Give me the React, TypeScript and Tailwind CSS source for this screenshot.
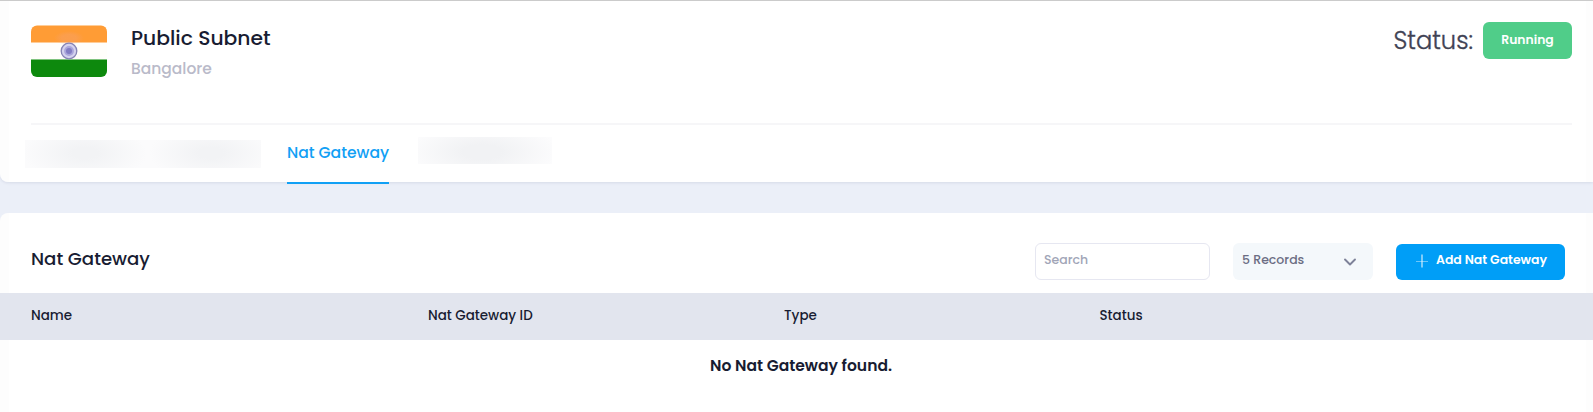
import React from "react";

function Flag() {
  return (
    <svg width="76" height="52" viewBox="0 0 76 52" className="mt-px block shrink-0">
      <defs>
        <clipPath id="flag-round">
          <rect y="0.500" width="76" height="51.500" rx="6" />
        </clipPath>
        <filter id="flag-soft" x="-10%" y="-50%" width="120%" height="200%">
          <feGaussianBlur stdDeviation="0.5" />
        </filter>
        <radialGradient id="flag-glow">
          <stop offset="0.5" stopColor="#f4a27a" stopOpacity="0.35" />
          <stop offset="1" stopColor="#f4a27a" stopOpacity="0" />
        </radialGradient>
      </defs>
      <g clipPath="url(#flag-round)">
        <rect width="76" height="52" fill="#fffefb" />
        <g filter="url(#flag-soft)">
          <rect x="-4" y="-4" width="84" height="21.500" fill="#ff9c35" />
          <rect x="-4" y="34.5" width="84" height="22" fill="#0d8909" />
        </g>
        <ellipse cx="38" cy="13" rx="15" ry="7" fill="url(#flag-glow)" />
        <circle cx="38" cy="26" r="7.8" fill="#d4d2ee" stroke="#8583b5" strokeWidth="1.3" />
        <circle cx="38" cy="26" r="4.900" fill="#aaa6dc" />
        <circle cx="38" cy="26" r="3" fill="#827dc4" />
      </g>
    </svg>
  );
}

const columns = [
  { label: "Name", cell: "w-[397px]" },
  { label: "Nat Gateway ID", cell: "w-[356px]" },
  { label: "Type", cell: "w-[315.500px]" },
  { label: "Status", cell: "w-[200px]" },
];

export default function App() {
  return (
    <div
      className="flex h-[412px] w-full flex-col overflow-hidden border-t border-[#cbcbcb] bg-[#ebeff8] text-[#181c32]"
      style={{ fontFamily: 'Poppins, Inter, "Liberation Sans", sans-serif' }}
    >
      <section className="h-[181px] shrink-0 rounded-bl-lg bg-[linear-gradient(90deg,#fdfdfd_9px,#ffffff_9px,#ffffff_1586px,#fdfdfd_1586px)] pr-[21px] pl-[31px] shadow-[0_1px_3px_rgba(70,80,120,0.12)]">
        <header className="flex h-[124px] items-start border-b-2 border-[#f6f6f8] pt-[23px]">
          <Flag />
          <div className="ml-6 flex flex-col">
            <h1 className="-mt-px h-[30px] text-[20.300px] leading-[30px] font-medium whitespace-nowrap">Public Subnet</h1>
            <p className="mt-1 h-6 text-[15.500px] leading-6 font-medium whitespace-nowrap text-[#b9bac9]">Bangalore</p>
          </div>
          <div className="-mt-0.5 ml-auto flex items-center">
            <span className="text-[24.200px] leading-9 font-light whitespace-nowrap text-[#3f4254] [-webkit-text-stroke:0.35px_#3f4254]">
              Status:
            </span>
            <span className="ml-2.5 flex h-[37px] w-[89px] items-center justify-center rounded-md bg-[#50cd89] pb-px text-[12.400px] font-semibold text-white">
              Running
            </span>
          </div>
        </header>
        <nav className="flex h-[59px] items-start">
          <div className="mt-[15px] -ml-1.5 flex h-7 w-[236px] shrink-0">
            <div className="w-[122px] bg-[radial-gradient(ellipse_62px_28px_at_60px_13px,#f2f3f5_20%,#fbfbfc_100%)]" />
            <div className="w-[114px] bg-[radial-gradient(ellipse_62px_28px_at_64px_13px,#f2f3f5_20%,#fbfbfc_100%)]" />
          </div>
          <a className="ml-[26px] flex h-[59px] w-[102px] shrink-0 justify-center border-b-[2.5px] border-[#11a0f5] pt-4 text-[15.600px] leading-6 font-medium whitespace-nowrap text-[#11a0f5]">
            Nat Gateway
          </a>
          <div className="mt-3 ml-[29px] h-[27px] w-[134px] shrink-0 bg-[radial-gradient(ellipse_76px_30px_at_64px_15px,#f1f2f4_25%,#fcfcfd_100%)]" />
        </nav>
      </section>

      <section className="mt-[31px] flex grow flex-col rounded-tl-lg bg-[linear-gradient(90deg,#fdfdfd_9px,#ffffff_9px,#ffffff_1586px,#fdfdfd_1586px)]">
        <div className="flex h-[79.500px] shrink-0 items-start pt-[29.500px] pr-7 pl-[31px]">
          <h2 className="mt-0.5 text-[18.150px] leading-[27px] font-medium whitespace-nowrap">Nat Gateway</h2>
          <input
            placeholder="Search"
            className="ml-auto h-[37px] w-[175px] rounded-md border border-[#e6e7f1] bg-white px-2 pb-0.5 text-[12.500px] font-medium placeholder:text-[#a1a5b7]"
          />
          <button className="ml-[23px] flex h-[37px] w-[140px] items-center justify-between rounded-md bg-[#f4f8fb] pr-4 pb-px pl-[9px] text-[12.500px] font-medium text-[#6b6d83]">
            <span className="whitespace-nowrap">5 Records</span>
            <svg width="14" height="14" viewBox="0 0 14 14" fill="none" className="mt-[3px]">
              <path d="M2 4.500 7 9.500l5-5" stroke="#7e8299" strokeWidth="1.900" strokeLinecap="round" strokeLinejoin="round" />
            </svg>
          </button>
          <button className="mt-px ml-[23px] flex h-[36px] w-[169px] items-center rounded-md bg-[#009ef7] pb-[3px] pl-5 text-[12.450px] font-semibold text-white">
            <svg width="12" height="14" viewBox="0 0 12 14" fill="none" className="mt-0.5 mr-2">
              <path d="M0 7.500h12" stroke="#6cc6fa" strokeWidth="1" />
              <path d="M6 .5v13" stroke="#e6f5fe" strokeWidth="1.100" />
            </svg>
            <span className="whitespace-nowrap">Add Nat Gateway</span>
          </button>
        </div>
        <div className="flex h-[47px] shrink-0 items-center bg-[#e2e5ee] pt-px pl-[31px] text-[13.450px] font-medium">
          {columns.map((column) => (
            <div key={column.label} className={column.cell}>
              {column.label}
            </div>
          ))}
        </div>
        <p className="mt-3.5 pl-[9px] text-center text-[15.550px] leading-6 font-semibold">No Nat Gateway found.</p>
      </section>
    </div>
  );
}
